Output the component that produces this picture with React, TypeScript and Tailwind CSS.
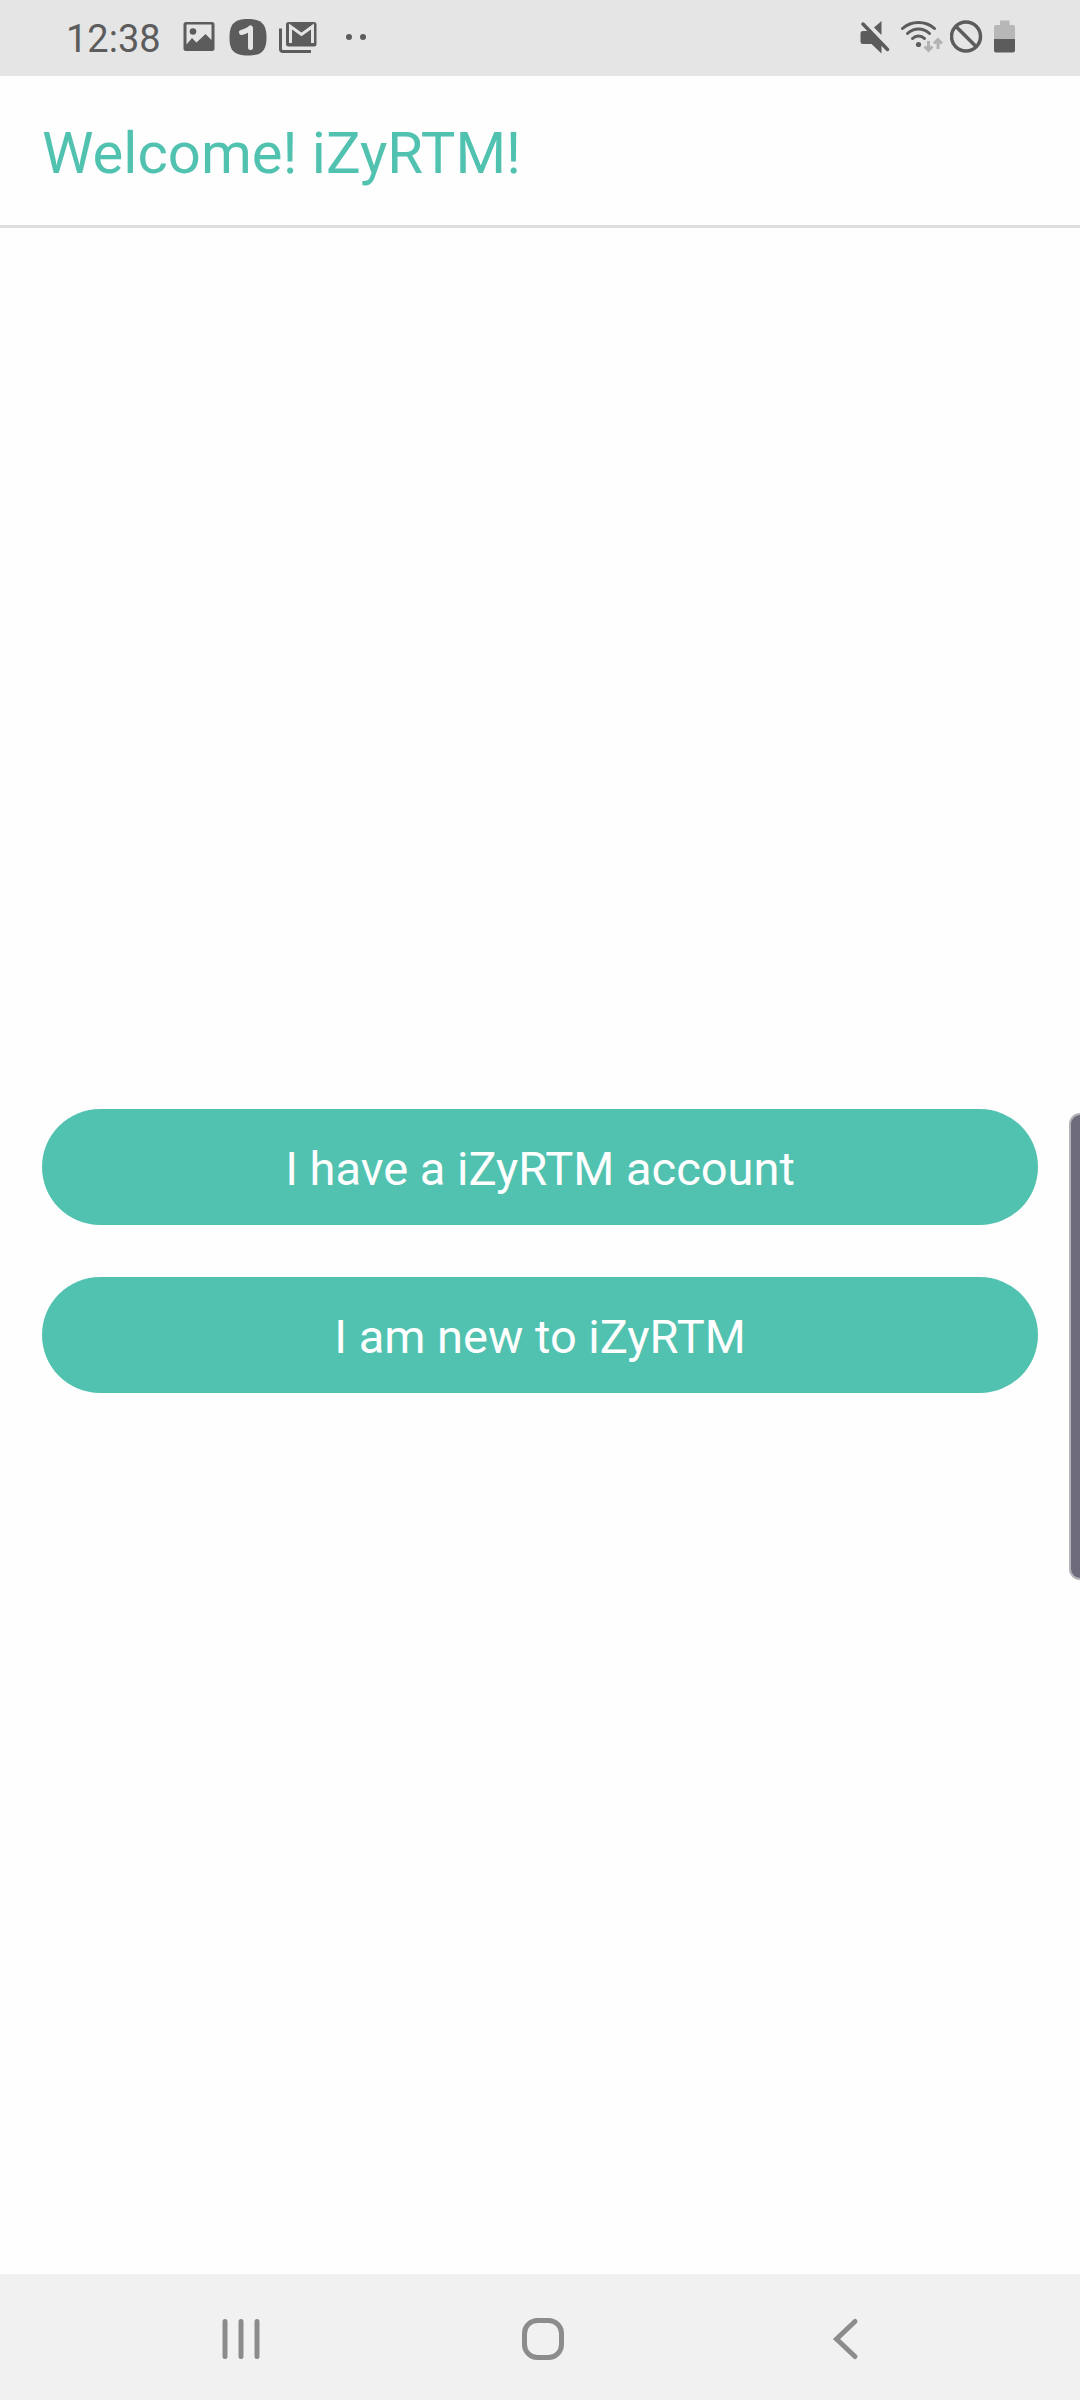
import type { ReactNode } from "react";

function StatusIcon({ label, width, className = "", children }: { label: string; width: number; className?: string; children: ReactNode }) {
  return (
    <svg role="img" aria-label={label} width={width} height={38} viewBox={`0 0 ${width} 38`} fill="none" className={className}>
      {children}
    </svg>
  );
}

function StatusBar() {
  return (
    <div className="flex h-[76px] shrink-0 items-center justify-between bg-[#e5e5e5] pl-[66px] pr-[64px] text-[#5c5c5c]">
      <div className="flex items-center">
        <span className="pt-0.5 text-[38px] leading-[48px]">12:38</span>
        {/* Picture */}
        <StatusIcon label="Screenshot saved" width={32} className="ml-[22px]">
          <path
            fill="currentColor"
            fillRule="evenodd"
            d="M3 3h26a2.500 2.500 0 0 1 2.500 2.500v24a2.500 2.500 0 0 1-2.500 2.500H3a2.500 2.500 0 0 1-2.500-2.500v-24A2.500 2.500 0 0 1 3 3ZM3.500 5.500v20L9 19l4.500 4.500L22.500 15l6 6V5.500Z"
          />
          <circle cx="10" cy="12.500" r="3.300" fill="currentColor" />
        </StatusIcon>
        {/* App badge */}
        <StatusIcon label="App notification" width={38} className="ml-[14px]">
          <path fill="currentColor" d="M19 0C32.500 0 37.500 5 37.500 18.500S32.500 36.500 19 36.500 .500 32 .500 18.500 5.500 0 19 0Z" />
          <path d="M12.500 13.500c4-1 7-2.500 9-4.500v19.500" stroke="#e5e5e5" strokeWidth="5" strokeLinecap="round" strokeLinejoin="round" />
        </StatusIcon>
        {/* Mail */}
        <StatusIcon label="Mail" width={38} className="ml-3">
          <path d="M1.500 9.500V30a2.500 2.500 0 0 0 2.500 2.500h28" stroke="currentColor" strokeWidth="3" />
          <rect x="7" y="3" width="30.500" height="24.500" rx="2.500" fill="currentColor" />
          <path d="M11.500 24V7.500l11 8 11-8V24" stroke="#e5e5e5" strokeWidth="3" />
        </StatusIcon>
        <StatusIcon label="More notifications" width={22} className="ml-7">
          <circle cx="4" cy="18" r="3" fill="currentColor" />
          <circle cx="18" cy="18" r="3" fill="currentColor" />
        </StatusIcon>
      </div>
      <div className="flex items-center">
        {/* Muted speaker */}
        <StatusIcon label="Muted" width={30}>
          <path fill="currentColor" d="M21.500 2v14L14 8.500ZM3 12h6l12.500 12v10.500L11.500 25H3a2.500 2.500 0 0 1-2.500-2.500v-8A2.500 2.500 0 0 1 3 12Z" />
          <path d="M4.500 2 30 29" stroke="#e5e5e5" strokeWidth="3" />
          <path d="m3 5 24.500 25.500" stroke="currentColor" strokeWidth="3.500" strokeLinecap="round" />
        </StatusIcon>
        {/* Wi-Fi with traffic arrows */}
        <StatusIcon label="Wi-Fi" width={42} className="ml-[11px]">
          <g stroke="currentColor" strokeWidth="3" strokeLinecap="round">
            <path d="M1.500 9.500c9-8 23-8 32 0" />
            <path d="M6.500 14.500c6.500-6 15.500-6 22 0" />
            <path d="M11.500 19.500c3.500-3.500 8.500-3.500 12 0" />
          </g>
          <circle cx="17.500" cy="25.500" r="2.600" fill="currentColor" />
          <g stroke="#b2b2b2" strokeWidth="3">
            <path d="M27.500 22v10m-4-4.500 4 4 4-4" />
            <path d="M37 30V20m-4 4.500 4-4 4 4" />
          </g>
        </StatusIcon>
        <StatusIcon label="No SIM" width={34} className="ml-[7px]">
          <circle cx="16" cy="17.500" r="14.500" stroke="currentColor" strokeWidth="3.500" />
          <path d="m6 7.500 20.500 20.500" stroke="currentColor" strokeWidth="3.500" />
        </StatusIcon>
        <StatusIcon label="Battery half full" width={22} className="ml-[10px]">
          <path fill="#b7b7b7" d="M6 1.500h9.500V6H19a2 2 0 0 1 2 2v12H0V8a2 2 0 0 1 2-2h4Z" />
          <path fill="currentColor" d="M0 20h21v11.500a2 2 0 0 1-2 2H2a2 2 0 0 1-2-2Z" />
        </StatusIcon>
      </div>
    </div>
  );
}

function PillButton({ children }: { children: ReactNode }) {
  return (
    <button type="button" className="h-[116px] w-full rounded-full bg-[#52c2b0] pt-1 text-[47px] leading-[56px] text-white">
      {children}
    </button>
  );
}

function NavButton({ label, children }: { label: string; children: ReactNode }) {
  return (
    <button type="button" aria-label={label} className="flex h-full flex-1 items-center justify-center">
      <svg width="44" height="44" viewBox="0 0 44 44" fill="none" stroke="currentColor" strokeWidth="5" strokeLinecap="round">
        {children}
      </svg>
    </button>
  );
}

export default function App() {
  return (
    <div className="relative flex min-h-screen flex-col bg-[#fefefe] font-['Roboto',sans-serif]">
      <StatusBar />
      <header className="flex h-[152px] shrink-0 items-center border-b-3 border-[#dedede] px-[42px] pt-1">
        <h1 className="text-[58px] leading-[68px] text-[#52c2b0]">Welcome! iZyRTM!</h1>
      </header>
      <main className="flex flex-1 flex-col justify-center gap-[52px] px-[42px]">
        <PillButton>I have a iZyRTM account</PillButton>
        <PillButton>I am new to iZyRTM</PillButton>
      </main>
      <nav aria-label="System" className="flex h-[126px] shrink-0 bg-[#f1f1f1] pl-[90px] pr-[84px] pt-1 text-[#8c8c8c]">
        <NavButton label="Recent apps">
          <path d="M6 4.500v35M22 4.500v35M38 4.500v35" />
        </NavButton>
        <NavButton label="Home">
          <rect x="3.500" y="3.500" width="37" height="37" rx="13" />
        </NavButton>
        <NavButton label="Back">
          <path d="M32 4.500 13.500 22 32 39.500" strokeLinejoin="miter" />
        </NavButton>
      </nav>
      {/* Edge panel handle */}
      <div className="absolute right-0 top-[1113px] h-[467px] w-[11px] rounded-l-[14px] border-y-2 border-l-2 border-[#b4b4b8] bg-[#6e6c7c]" />
    </div>
  );
}
